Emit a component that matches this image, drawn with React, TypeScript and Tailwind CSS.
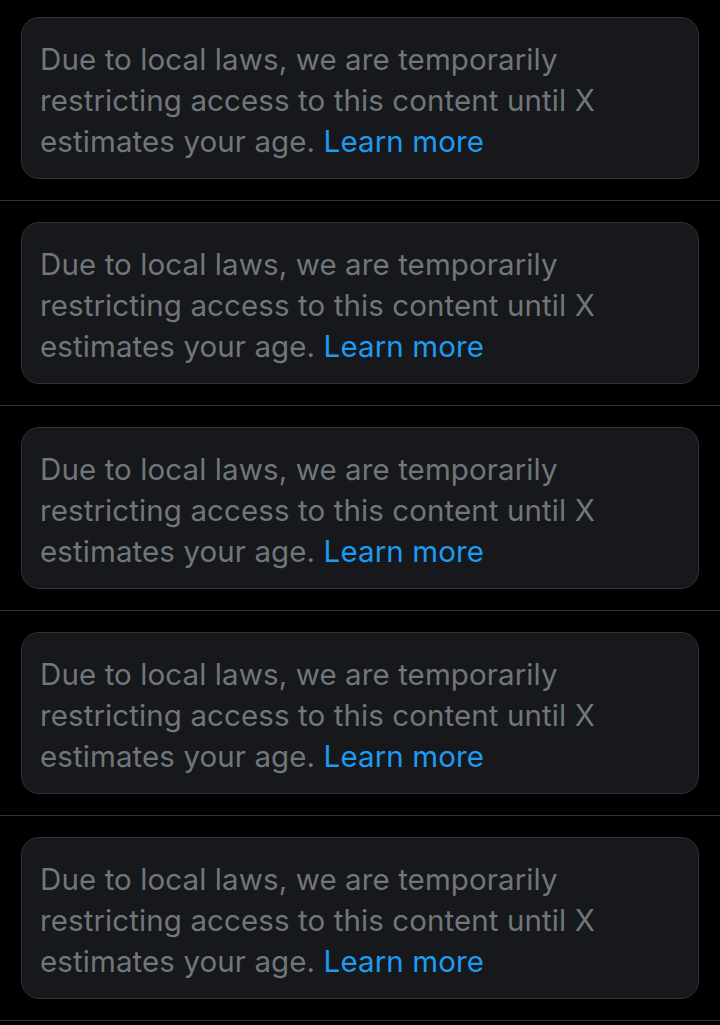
import React from "react";

function Item({ first }: { first?: boolean }) {
  return (
    <div className={`${first ? "pt-[17px]" : "pt-[21px]"} pb-[21px] border-b border-[#2f3336]`}>
      <div className="mx-[21px] w-[678px] rounded-[18px] border border-[#2f3336] bg-[#16181c] pl-[18px] pr-[18px] pt-[21px] pb-[16px]">
        <p
          className="text-[29.5px] leading-[41px] tracking-[0.1px] text-[#71767b]"
          style={{ fontFamily: "Inter, sans-serif" }}
        >
          Due to local laws, we are temporarily restricting access to this content until X estimates your age.{" "}
          <span className="text-[#1d9bf0]">Learn more</span>
        </p>
      </div>
    </div>
  );
}

export default function App() {
  return (
    <div className="w-[720px] h-[1025px] bg-black overflow-hidden">
      <Item first />
      <Item />
      <Item />
      <Item />
      <Item />
    </div>
  );
}
